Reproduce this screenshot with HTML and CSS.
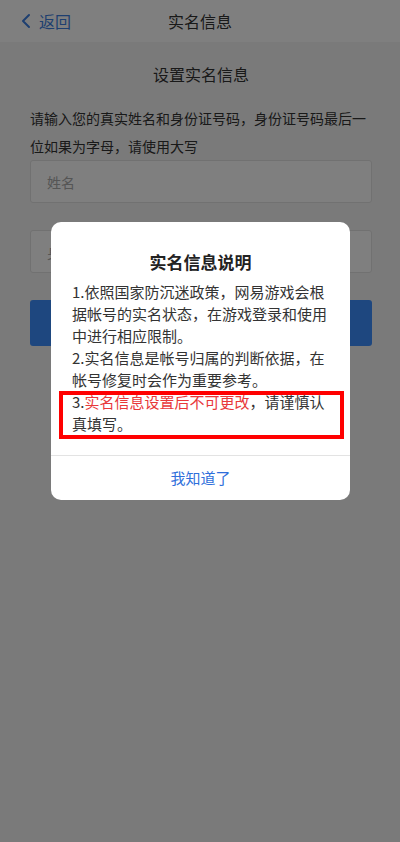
FILE: index.html
```html
<!DOCTYPE html>
<html lang="zh-CN">
<head>
<meta charset="utf-8">
<meta name="viewport" content="width=device-width, initial-scale=1">
<title>实名信息</title>
<link rel="stylesheet" href="styles.css">
</head>
<body>
<div class="page">
  <header class="nav">
    <a class="back" href="#">
      <svg class="chev" width="10" height="16" viewBox="0 0 10 16" aria-hidden="true"><path d="M8 2 L2 8 L8 14" fill="none" stroke="currentColor" stroke-width="2" stroke-linecap="round" stroke-linejoin="round"/></svg>
      <span>返回</span>
    </a>
    <h1 class="nav-title">实名信息</h1>
  </header>
  <main class="content">
    <h2 class="heading">设置实名信息</h2>
    <p class="tip">请输入您的真实姓名和身份证号码，身份证号码最后一位如果为字母，请使用大写</p>
    <div class="field"><span class="placeholder">姓名</span></div>
    <div class="field"><span class="placeholder">身份证号</span></div>
    <button class="submit" type="button">提交</button>
  </main>
</div>

<div class="mask">
  <div class="dialog">
    <h3 class="dialog-title">实名信息说明</h3>
    <div class="dialog-body">
      <p>1.依照国家防沉迷政策，网易游戏会根据帐号的实名状态，在游戏登录和使用中进行相应限制。</p>
      <p>2.实名信息是帐号归属的判断依据，在帐号修复时会作为重要参考。</p>
      <p class="marked">3.<span class="warn">实名信息设置后不可更改</span>，请谨慎认真填写。</p>
    </div>
    <div class="dialog-foot">我知道了</div>
  </div>
</div>
</body>
</html>
```

FILE: styles.css
```css
* { box-sizing: border-box; }

html, body {
  margin: 0;
  padding: 0;
}

body {
  font-family: "Noto Sans CJK SC", "Noto Sans", sans-serif;
  color: #333;
  background: #f5f5f5;
}

.page {
  min-height: 842px;
  background: #f5f5f5;
}

.nav {
  height: 42px;
  background: #fff;
  display: flex;
  align-items: center;
  justify-content: center;
  position: relative;
}

.back {
  position: absolute;
  left: 21px;
  top: 0;
  height: 42px;
  display: flex;
  align-items: center;
  gap: 8px;
  color: #3c7fe0;
  text-decoration: none;
  font-size: 16px;
}

.chev { display: block; }

.nav-title {
  margin: 0;
  font-size: 16px;
  font-weight: normal;
  color: #333;
  line-height: 42px;
}

.content {
  padding: 20px 28px 0 30px;
  display: flex;
  flex-direction: column;
}

.heading {
  margin: 0;
  font-size: 16px;
  font-weight: normal;
  line-height: 24px;
  text-align: center;
  color: #333;
}

.tip {
  margin: 18px 0 0;
  font-size: 14px;
  line-height: 28px;
  color: #333;
}

.field {
  height: 43px;
  margin-bottom: 27px;
  background: #fff;
  border: 1px solid #e2e2e2;
  border-radius: 3px;
  display: flex;
  align-items: center;
  padding-left: 16px;
}

.placeholder {
  font-size: 14px;
  color: #aaa;
}

.submit {
  height: 46px;
  border: 0;
  border-radius: 3px;
  background: #3d8fff;
  color: #fff;
  font-family: inherit;
  font-size: 16px;
}

.mask {
  position: fixed;
  inset: 0;
  background: rgba(0, 0, 0, 0.5);
  display: flex;
  justify-content: center;
  align-items: flex-start;
  padding-top: 222px;
  padding-left: 1px;
}

.dialog {
  width: 299px;
  background: #fff;
  border-radius: 10px;
}

.dialog-title {
  margin: 0;
  padding-top: 28px;
  font-size: 17px;
  line-height: 24px;
  font-weight: bold;
  text-align: center;
  color: #222;
}

.dialog-body {
  padding: 7px 20px 20px 21px;
}

.dialog-body p {
  margin: 0;
  font-size: 15px;
  line-height: 22px;
  color: #333;
}

.marked {
  position: relative;
}

.marked::after {
  content: "";
  position: absolute;
  top: 0;
  bottom: -4px;
  left: -13px;
  right: -14px;
  border: 4px solid #ff0000;
}

.warn {
  color: #e8383a;
}

.dialog-foot {
  border-top: 1px solid #e3e3e3;
  height: 45px;
  line-height: 44px;
  text-align: center;
  font-size: 15px;
  color: #2f6fdb;
}
```
